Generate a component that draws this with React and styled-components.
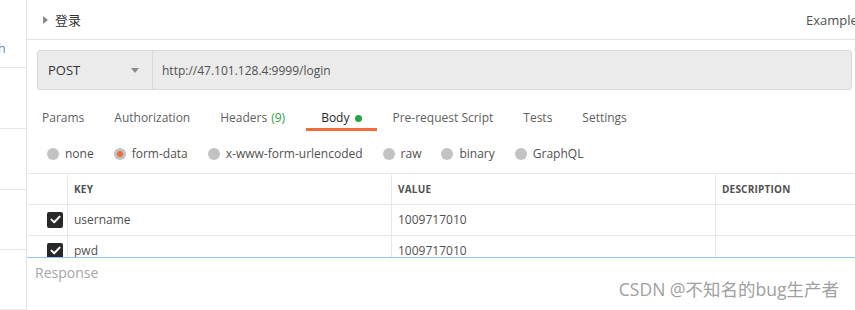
import React from "react";
import styled, { createGlobalStyle } from "styled-components";

const GlobalStyle = createGlobalStyle`
  html, body {
    margin: 0;
    padding: 0;
    background: #fff;
    overflow: hidden;
  }
  body {
    font-family: "Open Sans", "Noto Sans", "Noto Sans CJK SC", sans-serif;
  }
`;

const Page = styled.div`
  display: flex;
  width: 855px;
  height: 310px;
  overflow: hidden;
  position: relative;
  background: #fff;
`;

const Sidebar = styled.div`
  width: 26px;
  flex-shrink: 0;
  border-right: 1px solid #e3e3e3;
  display: flex;
  flex-direction: column;
  overflow: hidden;
`;

const SideItem = styled.div`
  height: ${(p) => p.h}px;
  flex-shrink: 0;
  border-bottom: 1px solid #e6e6e6;
  display: flex;
  align-items: flex-end;
  padding-bottom: ${(p) => p.pb || 0}px;
  box-sizing: border-box;
  font-size: 13px;
  color: #7587a8;
  white-space: nowrap;
`;

const Clipped = styled.span`
  margin-left: -7px;
`;

const Main = styled.div`
  flex: 1;
  display: flex;
  flex-direction: column;
  min-width: 0;
  overflow: hidden;
`;

const Header = styled.div`
  height: 39px;
  flex-shrink: 0;
  border-bottom: 1px solid #e3e3e3;
  display: flex;
  align-items: center;
  justify-content: space-between;
  padding-left: 16px;
  margin-right: -9px;
`;

const Title = styled.div`
  display: flex;
  align-items: center;
  gap: 7px;
  font-size: 13px;
  color: #333;
  font-family: "Noto Sans CJK SC", sans-serif;
`;

const Caret = styled.span`
  width: 0;
  height: 0;
  border-top: 4px solid transparent;
  border-bottom: 4px solid transparent;
  border-left: 5px solid #8a8a8a;
`;

const Examples = styled.span`
  font-size: 13px;
  color: #505050;
`;

const UrlRow = styled.div`
  padding: 10px 3px 0 10px;
`;

const UrlBar = styled.div`
  height: 38px;
  display: flex;
  border: 1px solid #d8d8d8;
  border-radius: 3px;
  background: #ebebeb;
`;

const Method = styled.div`
  width: 115px;
  flex-shrink: 0;
  box-sizing: border-box;
  border-right: 1px solid #d8d8d8;
  display: flex;
  align-items: center;
  justify-content: space-between;
  padding: 0 13px 0 10px;
  font-size: 13px;
  color: #333;
`;

const DownArrow = styled.span`
  width: 0;
  height: 0;
  border-left: 4px solid transparent;
  border-right: 4px solid transparent;
  border-top: 5px solid #8a8a8a;
`;

const UrlText = styled.div`
  display: flex;
  align-items: center;
  padding-left: 9px;
  font-size: 12px;
  color: #505050;
`;

const Tabs = styled.div`
  display: flex;
`;

const Tab = styled.div`
  display: flex;
  align-items: center;
  padding: 19px ${(p) => (p.wide ? 21 : 15)}px 1px 15px;
  height: 18px;
  border-bottom: 3px solid ${(p) => (p.active ? "#f26b3a" : "transparent")};
  font-size: 12px;
  line-height: 18px;
  color: ${(p) => (p.active ? "#282828" : "#606060")};
  white-space: nowrap;
  box-sizing: content-box;
`;

const Count = styled.span`
  color: #26a541;
  margin-left: 4px;
`;

const Dot = styled.span`
  width: 7px;
  height: 7px;
  border-radius: 50%;
  background: #26a541;
  margin-left: 6px;
`;

const Radios = styled.div`
  height: 42px;
  box-sizing: border-box;
  padding: 3px 0 0 20px;
  display: flex;
  align-items: center;
  gap: 20px;
`;

const Radio = styled.label`
  display: flex;
  align-items: center;
  gap: 6px;
  font-size: 12px;
  color: #505050;
`;

const Circle = styled.span`
  width: 12px;
  height: 12px;
  border-radius: 50%;
  background: #c2c2c2;
  display: flex;
  align-items: center;
  justify-content: center;
  &::after {
    content: "";
    width: 6px;
    height: 6px;
    border-radius: 50%;
    background: ${(p) => (p.checked ? "#f26b3a" : "transparent")};
  }
`;

const TableWrap = styled.div`
  height: 83px;
  overflow: hidden;
  border-top: 1px solid #e8e8e8;
  flex-shrink: 0;
`;

const Grid = styled.div`
  display: grid;
  grid-template-columns: 40px 324px 324px 1fr;
`;

const Cell = styled.div`
  height: 30px;
  border-bottom: 1px solid #e8e8e8;
  border-left: ${(p) => (p.first ? "none" : "1px solid #e8e8e8")};
  display: flex;
  align-items: center;
  justify-content: ${(p) => (p.first ? "flex-end" : "flex-start")};
  padding: 0 ${(p) => (p.first ? "4px" : "0")} ${(p) => (p.head ? "0" : "1px")} ${(p) => (p.first ? "0" : "6px")};
  box-sizing: border-box;
  height: 31px;
  font-size: ${(p) => (p.head ? "10px" : "12px")};
  font-weight: ${(p) => (p.head ? 700 : 400)};
  color: #505050;
  letter-spacing: ${(p) => (p.head ? "0.2px" : "0")};
`;

const Check = styled.span`
  width: 16px;
  height: 16px;
  border-radius: 2px;
  background: #282828;
  display: flex;
  align-items: center;
  justify-content: center;
`;

const Response = styled.div`
  flex: 1;
  border-top: 1px solid #97c3f0;
  padding: 5px 8px;
  font-size: 14px;
  color: #a6a6a6;
`;

const Watermark = styled.div`
  position: absolute;
  right: 16px;
  bottom: 9px;
  font-size: 17.5px;
  color: #a0a0a0;
  font-family: "Open Sans", "Noto Sans CJK SC", sans-serif;
`;

const CheckBox = () => (
  <Check>
    <svg width="11" height="9" viewBox="0 0 11 9">
      <path d="M1.5 4.6 L4.2 7.2 L9.6 1.6" fill="none" stroke="#fff" strokeWidth="2" strokeLinecap="round" strokeLinejoin="round" />
    </svg>
  </Check>
);

const radios = [
  ["none", false],
  ["form-data", true],
  ["x-www-form-urlencoded", false],
  ["raw", false],
  ["binary", false],
  ["GraphQL", false],
];

const rows = [
  ["username", "1009717010"],
  ["pwd", "1009717010"],
];

export default function App() {
  return (
    <>
      <GlobalStyle />
      <Page>
        <Sidebar>
          <SideItem h={68} pb={10}>
            <Clipped>th</Clipped>
          </SideItem>
          <SideItem h={61} />
          <SideItem h={61} />
          <SideItem h={60} />
          <SideItem h={60} />
        </Sidebar>
        <Main>
          <Header>
            <Title>
              <Caret />
              登录
            </Title>
            <Examples>Examples</Examples>
          </Header>
          <UrlRow>
            <UrlBar>
              <Method>
                POST
                <DownArrow />
              </Method>
              <UrlText>http://47.101.128.4:9999/login</UrlText>
            </UrlBar>
          </UrlRow>
          <Tabs>
            <Tab>Params</Tab>
            <Tab>Authorization</Tab>
            <Tab wide>
              Headers<Count>(9)</Count>
            </Tab>
            <Tab active>
              Body<Dot />
            </Tab>
            <Tab>Pre-request Script</Tab>
            <Tab>Tests</Tab>
            <Tab>Settings</Tab>
          </Tabs>
          <Radios>
            {radios.map(([label, checked]) => (
              <Radio key={label}>
                <Circle checked={checked} />
                {label}
              </Radio>
            ))}
          </Radios>
          <TableWrap>
            <Grid>
              <Cell first head />
              <Cell head>KEY</Cell>
              <Cell head>VALUE</Cell>
              <Cell head>DESCRIPTION</Cell>
              {rows.map(([k, v]) => (
                <React.Fragment key={k}>
                  <Cell first>
                    <CheckBox />
                  </Cell>
                  <Cell>{k}</Cell>
                  <Cell>{v}</Cell>
                  <Cell />
                </React.Fragment>
              ))}
            </Grid>
          </TableWrap>
          <Response>Response</Response>
        </Main>
        <Watermark>CSDN @不知名的bug生产者</Watermark>
      </Page>
    </>
  );
}
